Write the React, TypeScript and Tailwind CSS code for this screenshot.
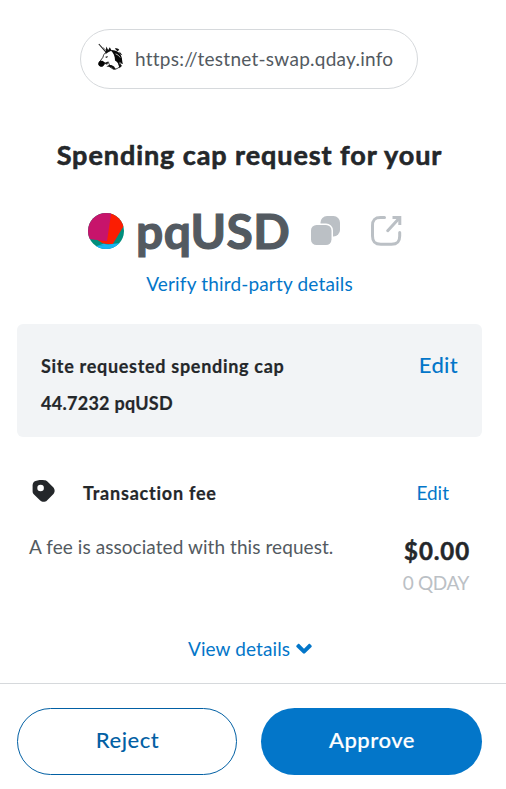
function UnicornIcon() {
  return (
    <svg className="-mt-[5px] h-[28px] w-[26px] shrink-0" viewBox="0 0 26 28" fill="none">
      <path d="M.8 1 8.400 9.600" stroke="#222" strokeWidth="1.100" />
      <path d="M5 4.600 9.600 8.600" stroke="#555" strokeWidth=".8" />
      <path
        d="M7.600 9.500C9 8 11 7.400 13.500 7.600c5 .4 8.200 3.400 9.300 7.600.7 3.600.4 6.800-2 9.300-1.600 1.300-3.600 1.800-5.600 1.600l-4-2.600c.4-2 .2-3.100-.9-3.600l-3 .4-3.200 3C2 23.400.8 22.400.8 21c0-.9.200-1.500.7-2.100L5 14.200c.3-1.900 1.200-3.500 2.600-4.700Z"
        fill="#fff"
        stroke="#222"
        strokeWidth=".9"
      />
      <path d="M8.300 3.600 10.200 7 11.800 4.200 13.600 7.500 10.200 9.200 7.400 11.200Z" fill="#111" />
      <path d="M1.300 18.500c1-.8 2.600-1 3.900-.3l2.100 1.600-2 3.100c-1.800 1.300-4.300.6-4.800-1.200-.2-1.200.1-2.300.8-3.200Z" fill="#050505" />
      <path d="M12.800 7.300c5.700-.6 9.900 2.500 11 7.700.4 2.200.5 4.300 1.100 6-1.300-.4-2.400-1.300-3.100-2.300 0 1.700-.2 3-.7 4.300-.5-2.400-2.100-4.600-4.100-5.600.1-4-1.500-7.400-4.200-10.100Z" fill="#080808" />
      <path d="M17.600 10.900c2 .7 3.500 1.900 4.600 3.600" stroke="#fff" strokeWidth=".7" />
      <path d="M16.800 5.600c1.700-.9 3.700-.2 4.500 1.500l-2 1.200Z M21.500 8.400l2.900 3.800-3-1.300Z" fill="#111" />
      <path d="m7 13.900 2.900-1-.9 2.200Z" fill="#111" />
      <path d="M6.500 20.800c1.600-1.800 3.300-2.300 5-1.700-1.300.6-2.100 1.400-2.300 2.600Z" fill="#222" />
      <path d="M8.400 23.600c2.400-2.400 5.300-2.200 7.900.1l1.400 2.700-2.200-.1c-1.300-1.800-3.700-2.700-7.100-2.700ZM20.200 20.200l3.900 2.500-2.700 2.600Z" fill="#111" />
    </svg>
  );
}

function TokenAvatar() {
  return (
    <svg className="size-[36px] shrink-0" viewBox="0 0 36 36">
      <clipPath id="avatar">
        <circle cx="18" cy="18" r="18" />
      </clipPath>
      <g clipPath="url(#avatar)">
        <rect width="36" height="36" fill="#018e7c" />
        <path d="M22 0h14v12.500L24.500 31.500 15 30.500 8 26Z" fill="#fc1d02" />
        <path d="M0 0h23.200L19 28.300 1 26H0Z" fill="#c7146b" />
        <path d="M4 33.500 36 29.400V36H4Z" fill="#18b5f2" />
        <path d="M9 32.800 15.500 30.800 21 31.400Z" fill="#18b5f2" />
      </g>
    </svg>
  );
}

function CopyIcon() {
  return (
    <svg className="size-[30px] shrink-0" viewBox="0 0 30 30" fill="#bbc0c5">
      <rect x="9.500" y="0" width="19.500" height="20.500" rx="6.500" />
      <rect x="-1.500" y="7.500" width="23.500" height="23.500" rx="7" fill="#fff" />
      <rect x="0" y="9" width="20.500" height="20" rx="5.500" />
    </svg>
  );
}

function ExportIcon() {
  return (
    <svg
      className="size-[32px] shrink-0"
      viewBox="0 0 32 32"
      fill="none"
      stroke="#bbc0c5"
      strokeWidth="3"
      strokeLinecap="round"
      strokeLinejoin="round"
    >
      <path d="M14.500 2.500h-4C4.500 2.500 2.500 4.800 2.500 10.800v10.200c0 6 2.300 8.300 8.300 8.300H21.500c6 0 8.200-2.300 8.200-8.300v-3.500" />
      <path d="m17.700 15.700 11-12" />
      <path d="M22.500 2.500h7.300v7.500" strokeLinecap="butt" strokeLinejoin="miter" />
    </svg>
  );
}

function TagIcon() {
  return (
    <svg className="-mt-[2px] size-[23px] shrink-0" viewBox="0 0 23 23">
      <path
        d="M5.500.6C7.500 0 10 0 12.200.2c1.300 0 2.300.4 3.200 1.300l5.800 5.700c1.900 1.900 1.900 5.100 0 7l-6.200 6.200c-1.900 1.900-4.900 1.900-6.800.1L2 14.500C1 13.600.6 12.600.6 11.300L.6 5C.8 2.400 2.500.8 5.500.6Z"
        fill="#24272a"
      />
      <circle cx="8.600" cy="8" r="3.300" fill="#fff" />
    </svg>
  );
}

export default function App() {
  return (
    <div className="flex h-[789px] w-[506px] flex-col bg-white font-['Lato','Liberation_Sans',sans-serif] whitespace-nowrap text-[#24272a]">
      <main className="flex h-[683px] flex-col pr-[24px] pl-[17px] pt-[29px]">
        <div className="ml-[63px] flex h-[60px] w-[338px] items-center gap-[11px] rounded-full border border-[#d6d9dc] pl-[17px]">
          <UnicornIcon />
          <span className="text-[19px] leading-[24px] tracking-[0.26px] text-[#535a61]">
            https://testnet-swap.qday.info
          </span>
        </div>

        <h1 className="mt-[50px] text-center text-[27px] leading-[32px] font-bold tracking-[0.93px] [-webkit-text-stroke:0.6px_#24272a]">
          Spending cap request for your
        </h1>

        <div className="mt-[30px] flex h-[60px] items-center pl-[71px]">
          <TokenAvatar />
          <span className="ml-[12px] w-[175px] text-[48px] leading-[60px] font-bold tracking-[0.4px] text-[#535a61] [-webkit-text-stroke:1.2px_#535a61]">
            pqUSD
          </span>
          <CopyIcon />
          <span className="ml-[29px] flex">
            <ExportIcon />
          </span>
        </div>

        <a className="mt-[11px] text-center text-[19px] leading-[24px] tracking-[0.17px] text-[#0376c9]">
          Verify third-party details
        </a>

        <section className="mt-[28px] flex h-[113px] justify-between rounded-[6px] bg-[#f2f4f6] pt-[30px] pr-[24px] pl-[24px]">
          <div className="flex flex-col gap-[13px] text-[18px] leading-[24px] font-bold [-webkit-text-stroke:0.2px_#24272a]">
            <span className="tracking-[0.7px]">Site requested spending cap</span>
            <span className="tracking-[0.27px]">44.7232 pqUSD</span>
          </div>
          <a className="-mt-[1px] text-[22px] leading-[24px] font-medium tracking-[0.3px] text-[#0376c9]">Edit</a>
        </section>

        <section className="mt-[43px] flex h-[24px] items-center pr-[33px] pl-[15px]">
          <TagIcon />
          <span className="ml-[28px] pt-[2px] text-[18px] leading-[24px] font-bold tracking-[0.77px] [-webkit-text-stroke:0.2px_#24272a]">
            Transaction fee
          </span>
          <a className="ml-auto pt-[2px] text-[19px] leading-[24px] text-[#0376c9]">Edit</a>
        </section>

        <section className="mt-[31px] flex justify-between pr-[12px] pl-[12px]">
          <p className="text-[19px] leading-[24px] tracking-[0.07px] text-[#535a61]">
            A fee is associated with this request.
          </p>
          <div className="flex flex-col items-end gap-[4px]">
            <span className="text-[24px] leading-[32px] font-bold tracking-[0.9px] [-webkit-text-stroke:0.5px_#24272a]">$0.00</span>
            <span className="pr-[1px] text-[19px] leading-[24px] tracking-[-0.4px] text-[#bbc0c5]">0 QDAY</span>
          </div>
        </section>

        <a className="mt-[42px] flex items-center justify-center gap-[6px] pl-[1px] text-[19px] leading-[24px] tracking-[0.1px] text-[#0376c9]">
          View details
          <svg className="-mt-[1px] h-[11px] w-[16px]" viewBox="0 0 16 11" fill="#0376c9">
            <path d="M7 10.300.5 3.900c-.4-.4-.4-.9 0-1.300L2 1.100c.4-.4.900-.4 1.300 0L8 5.700l4.700-4.600c.4-.4.900-.4 1.300 0l1.500 1.500c.4.4.4.900 0 1.300L9 10.300c-.6.600-1.400.6-2 0Z" />
          </svg>
        </a>
      </main>

      <footer className="flex h-[106px] gap-[24px] border-t border-[#d6d9dc] pt-[24px] pr-[24px] pl-[17px]">
        <button className="flex h-[67px] w-[220px] items-center justify-center rounded-full border border-[#0260a4] pb-[3px] pl-[1px] text-[22px] leading-[28px] font-medium tracking-[0.5px] text-[#0260a4]">
          Reject
        </button>
        <button className="flex h-[67px] w-[221px] items-center justify-center rounded-full bg-[#0376c9] pb-[3px] pl-[1px] text-[22px] leading-[28px] font-medium tracking-[0.55px] text-white [-webkit-text-stroke:0.2px_#ffffff]">
          Approve
        </button>
      </footer>
    </div>
  );
}
